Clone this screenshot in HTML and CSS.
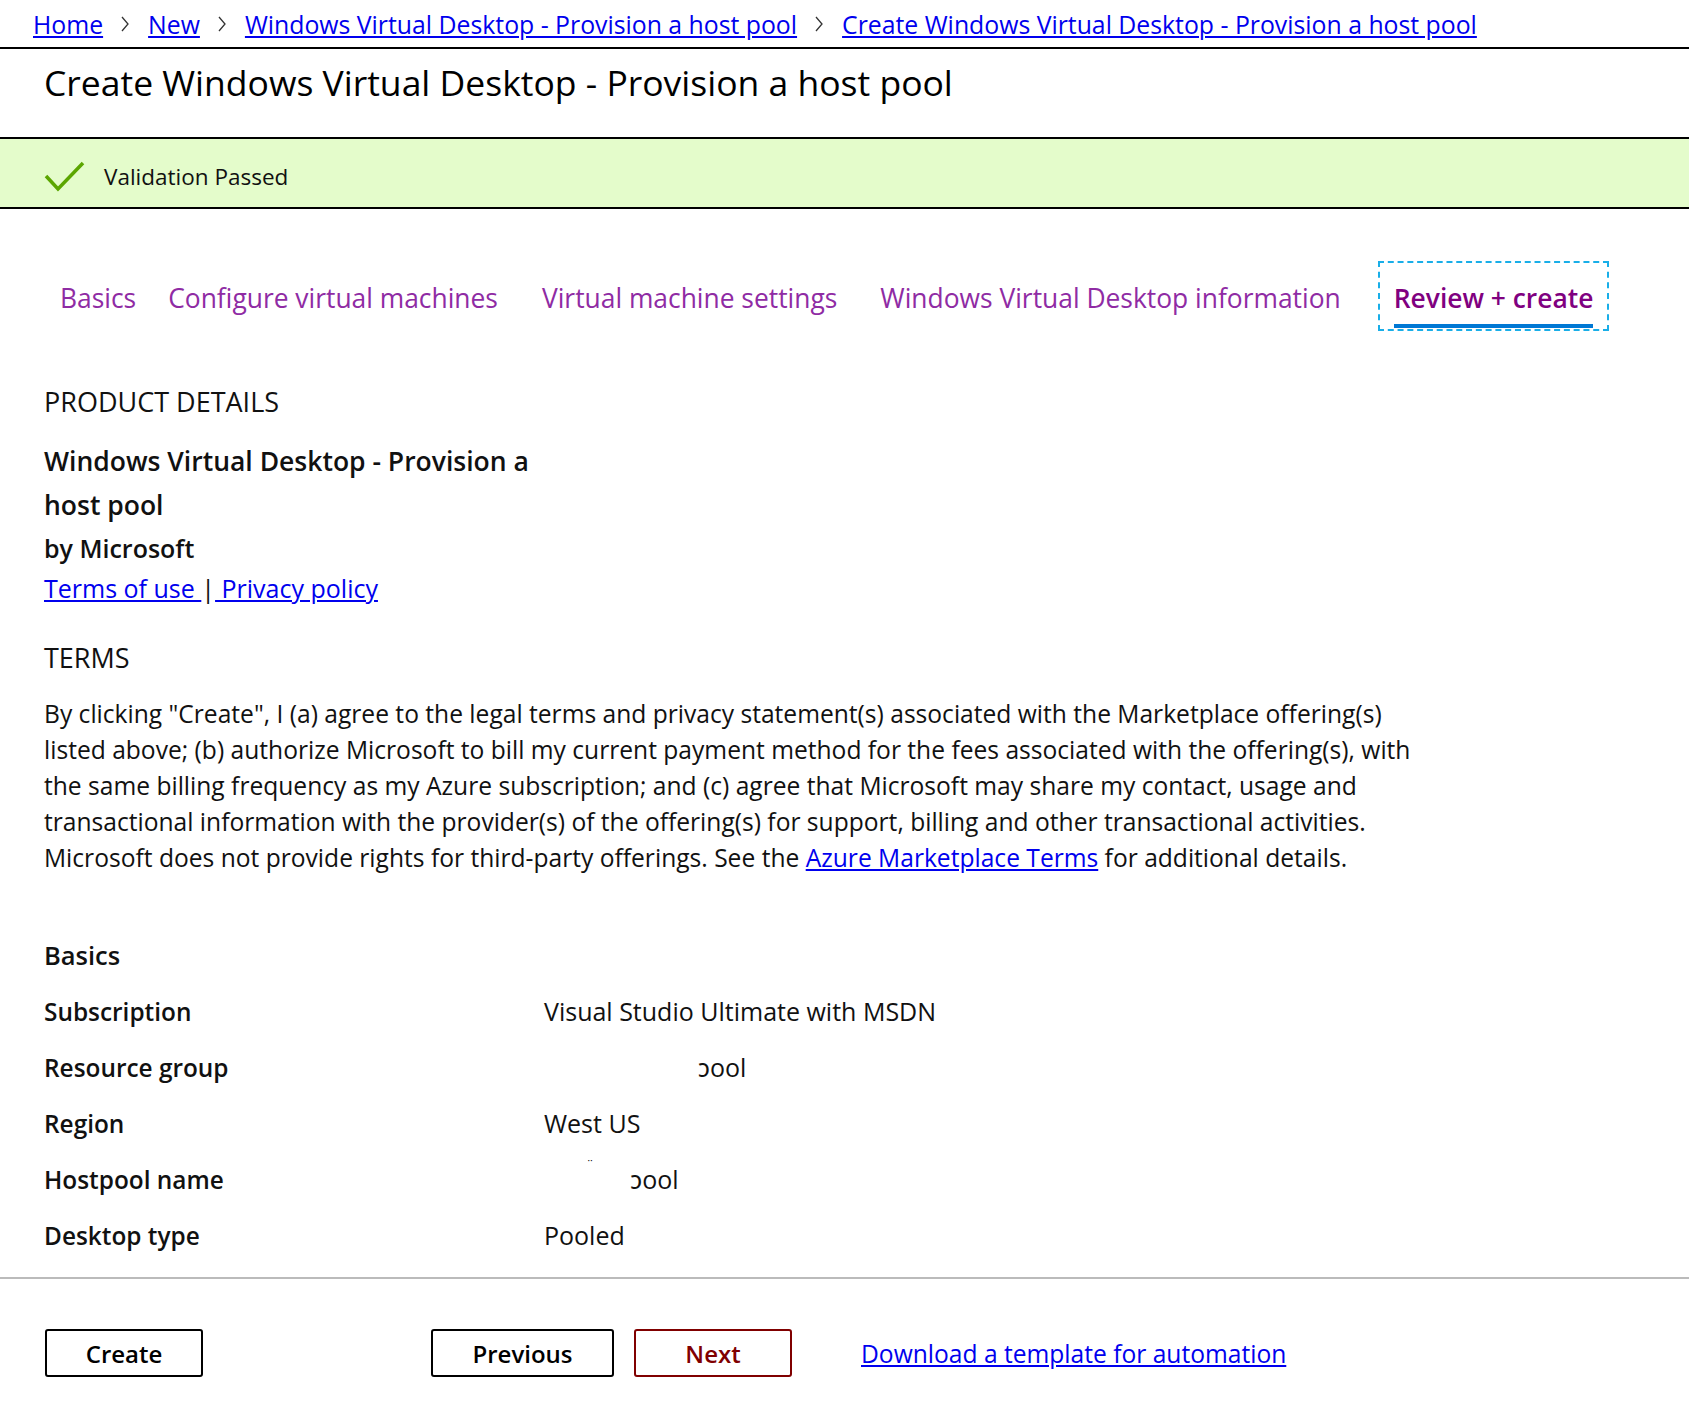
FILE: index.html
```html
<!DOCTYPE html>
<html lang="en">
<head>
<meta charset="utf-8">
<title>Create Windows Virtual Desktop - Provision a host pool</title>
<link rel="stylesheet" href="styles.css">
</head>
<body>
<nav class="breadcrumb">
  <a href="#">Home</a>
  <svg class="chev" viewBox="0 0 10 16" width="10" height="16"><polyline points="2,1 8,8 2,15"/></svg>
  <a href="#">New</a>
  <svg class="chev" viewBox="0 0 10 16" width="10" height="16"><polyline points="2,1 8,8 2,15"/></svg>
  <a href="#">Windows Virtual Desktop - Provision a host pool</a>
  <svg class="chev" viewBox="0 0 10 16" width="10" height="16"><polyline points="2,1 8,8 2,15"/></svg>
  <a href="#">Create Windows Virtual Desktop - Provision a host pool</a>
</nav>
<header class="titlebar">
  <h1>Create Windows Virtual Desktop - Provision a host pool</h1>
</header>
<div class="banner">
  <svg class="check" viewBox="0 0 42 32" width="42" height="32"><polyline points="2,16 14,29 39,3"/></svg>
  <span>Validation Passed</span>
</div>
<main class="content">
  <div class="tabs">
    <div class="tab"><span class="tab-label">Basics</span></div>
    <div class="tab"><span class="tab-label">Configure virtual machines</span></div>
    <div class="tab"><span class="tab-label">Virtual machine settings</span></div>
    <div class="tab"><span class="tab-label">Windows Virtual Desktop information</span></div>
    <div class="tab active"><span class="tab-label">Review + create</span></div>
  </div>

  <h2 class="section-title first">PRODUCT DETAILS</h2>
  <div class="product-name">Windows Virtual Desktop - Provision a host pool</div>
  <div class="publisher">by Microsoft</div>
  <div class="links"><a href="#">Terms of use </a>|<a href="#"> Privacy policy</a></div>

  <h2 class="section-title terms">TERMS</h2>
  <p class="terms-text">By clicking "Create", I (a) agree to the legal terms and privacy statement(s) associated with the Marketplace offering(s) listed above; (b) authorize Microsoft to bill my current payment method for the fees associated with the offering(s), with the same billing frequency as my Azure subscription; and (c) agree that Microsoft may share my contact, usage and transactional information with the provider(s) of the offering(s) for support, billing and other transactional activities. Microsoft does not provide rights for third-party offerings. See the <a href="#">Azure Marketplace Terms</a> for additional details.</p>

  <div class="summary">
    <div class="summary-head">Basics</div>
    <div class="row"><div class="label">Subscription</div><div class="value">Visual Studio Ultimate with MSDN</div></div>
    <div class="row"><div class="label">Resource group</div><div class="value"><span class="masked rg">ɔool</span></div></div>
    <div class="row"><div class="label">Region</div><div class="value">West US</div></div>
    <div class="row"><div class="label">Hostpool name</div><div class="value"><span class="speck">¨</span><span class="masked hp">ɔool</span></div></div>
    <div class="row"><div class="label">Desktop type</div><div class="value">Pooled</div></div>
  </div>
</main>
<footer class="footer">
  <button class="btn create">Create</button>
  <button class="btn prev">Previous</button>
  <button class="btn next">Next</button>
  <a class="download" href="#">Download a template for automation</a>
</footer>
</body>
</html>
```

FILE: styles.css
```css
html, body {
  margin: 0;
  padding: 0;
  background: #fff;
}
body {
  font-family: "Open Sans", "Noto Sans", "DejaVu Sans", sans-serif;
  color: #111;
}
a {
  color: #0000ee;
  text-decoration: underline;
}

.breadcrumb {
  height: 47px;
  display: flex;
  align-items: center;
  padding-left: 33px;
  border-bottom: 2px solid #000;
  font-size: 24.8px;
  white-space: nowrap;
}
.chev {
  margin: 0 18px 0 17px;
  fill: none;
  stroke: #333;
  stroke-width: 1.3;
}

.titlebar {
  height: 90px;
  box-sizing: border-box;
  padding: 11px 44px 0;
  border-bottom: 2px solid #000;
}
.titlebar h1 {
  margin: 0;
  font-size: 35.5px;
  line-height: 44px;
  font-weight: 500;
  color: #000;
}

.banner {
  height: 70px;
  display: flex;
  align-items: center;
  padding: 6px 0 0 44px;
  box-sizing: border-box;
  background: #e4fccb;
  border-bottom: 2px solid #000;
  font-size: 22.5px;
}
.check {
  margin-right: 18px;
  fill: none;
  stroke: #5ba600;
  stroke-width: 3.5;
}

.content {
  padding: 52px 44px 14px;
}

.tabs {
  display: flex;
}
.tab {
  border: 2px dashed transparent;
  padding: 17px 14px 1px;
  color: #8f2ba4;
  font-size: 26.4px;
}
.tab:nth-child(3) { margin-left: 12px; }
.tab:nth-child(4) { margin-left: 11px; }
.tab:nth-child(5) { margin-left: 21px; }
.tab-label {
  display: block;
  line-height: 36px;
  padding-bottom: 8px;
  border-bottom: 4px solid transparent;
  white-space: nowrap;
}
.tab.active {
  border-color: #19aee8;
  color: #800080;
  font-weight: 600;
}
.tab.active .tab-label {
  border-bottom-color: #0078d4;
}

.section-title {
  margin: 0;
  font-size: 27px;
  line-height: 36px;
  font-weight: 400;
}
.section-title.first {
  margin-top: 53px;
}
.section-title.terms {
  margin-top: 32px;
}
.product-name {
  margin-top: 19px;
  width: 520px;
  font-size: 26.5px;
  line-height: 44px;
  font-weight: 600;
}
.publisher {
  margin-top: 1px;
  font-size: 25px;
  line-height: 40px;
  font-weight: 600;
}
.links {
  font-size: 25px;
  line-height: 40px;
}
.terms-text {
  margin: 20px 0 0;
  width: 1400px;
  font-size: 24.6px;
  line-height: 36px;
}

.summary {
  margin-top: 51px;
  font-size: 25px;
}
.summary-head,
.row {
  height: 56px;
  display: flex;
  align-items: center;
}
.summary-head {
  font-weight: 600;
  font-size: 25.5px;
}
.label {
  width: 500px;
  font-weight: 600;
  font-size: 24.4px;
}
.value {
  display: flex;
  align-items: center;
}
.masked.rg {
  margin-left: 154px;
}
.speck {
  margin-left: 42px;
  font-size: 14px;
  align-self: flex-start;
  margin-top: -6px;
}
.masked.hp {
  margin-left: 36px;
}

.footer {
  border-top: 2px solid #bbb;
  padding: 50px 44px 39px;
  display: flex;
  align-items: center;
}
.btn {
  height: 48px;
  box-sizing: border-box;
  border: 2px solid #000;
  border-radius: 3px;
  background: #fff;
  font-family: "Open Sans", "Noto Sans", sans-serif;
  font-size: 24px;
  font-weight: 600;
  color: #000;
  padding: 0;
}
.btn.create {
  width: 158px;
  margin-left: 1px;
}
.btn.prev {
  width: 183px;
  margin-left: 228px;
}
.btn.next {
  width: 158px;
  margin-left: 20px;
  border-color: #800000;
  color: #800000;
}
.download {
  margin-left: 69px;
  font-size: 24.6px;
}
```
